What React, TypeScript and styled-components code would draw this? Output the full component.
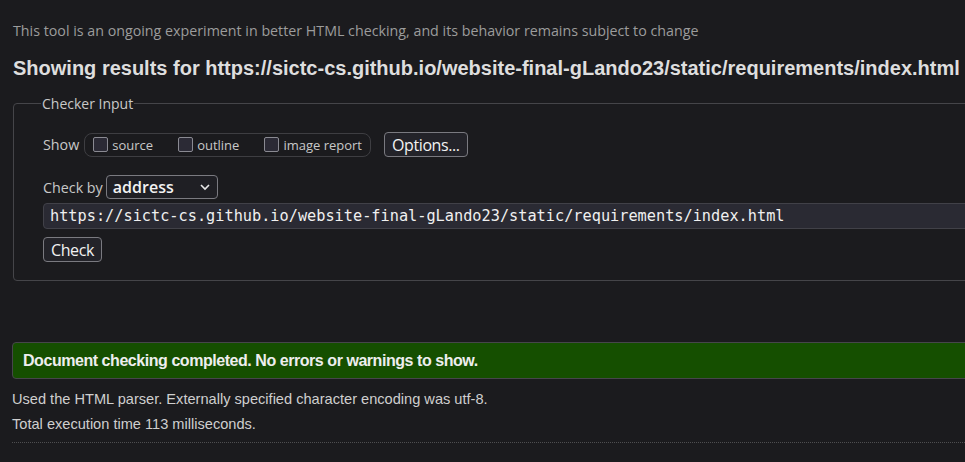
import React from "react";
import styled, { createGlobalStyle } from "styled-components";

const GlobalStyle = createGlobalStyle`
  html, body {
    margin: 0;
    padding: 0;
    background: #1b1b1e;
    overflow: hidden;
  }
  body {
    font-family: "Open Sans", "Noto Sans", sans-serif;
    color: #d8d8d8;
  }
`;

const Page = styled.div`
  width: 1010px;
  padding: 21px 0 0 13px;
`;

const Notice = styled.p`
  margin: 0;
  font-family: "Open Sans", sans-serif;
  font-size: 14.25px;
  line-height: 20px;
  color: #9c9c9c;
`;

const Heading = styled.h2`
  margin: 16px 0 0;
  font-family: "Liberation Sans", Arial, sans-serif;
  font-weight: 700;
  font-size: 20px;
  line-height: 22px;
  color: #dedede;
  white-space: nowrap;
`;

const Fieldset = styled.fieldset`
  margin: 15px 0 0;
  padding: 19px 29px 18px;
  border: 1px solid #454549;
  border-radius: 4px;
  min-width: 0;
`;

const Legend = styled.legend`
  margin-left: -2px;
  padding: 0 1px;
  font-size: 14px;
  color: #c8c8c8;
`;

const Row = styled.div<{ $gap?: number; $top?: number }>`
  display: flex;
  align-items: center;
  gap: ${(p) => p.$gap ?? 5}px;
  margin-top: ${(p) => p.$top ?? 0}px;
`;

const Label = styled.span`
  font-size: 14.3px;
  color: #c8c8c8;
`;

const CheckGroup = styled.div`
  display: flex;
  align-items: center;
  gap: 25px;
  height: 22px;
  padding: 0 8px;
  border: 1px solid #3e3e42;
  border-radius: 8px;
`;

const CheckItem = styled.label`
  display: flex;
  align-items: center;
  gap: 4px;
  font-size: 13px;
  color: #c8c8c8;
`;

const Box = styled.span`
  width: 13px;
  height: 13px;
  border: 1.5px solid #8a8a92;
  border-radius: 2px;
  background: #2b2a35;
`;

const Button = styled.button<{ $left?: number }>`
  margin-left: ${(p) => p.$left ?? 0}px;
  height: 25px;
  padding: 0 7px;
  font-family: "Open Sans", sans-serif;
  font-size: 16px;
  letter-spacing: -0.4px;
  color: #f2f2f2;
  background: #232329;
  border: 1px solid #7a7a80;
  border-radius: 4px;
`;

const Select = styled.div`
  display: flex;
  align-items: center;
  justify-content: space-between;
  width: 112px;
  height: 24px;
  box-sizing: border-box;
  padding: 0 6px;
  border: 1px solid #7a7a80;
  border-radius: 4px;
  background: #1f1f24;
  font-size: 16px;
  font-weight: 600;
  color: #f2f2f2;
`;

const UrlInput = styled.div`
  margin-top: 4px;
  height: 26px;
  box-sizing: border-box;
  padding: 0 6px;
  display: flex;
  align-items: center;
  background: #2a2a33;
  border: 1px solid #414148;
  border-radius: 4px;
  font-family: "DejaVu Sans Mono", "Liberation Mono", monospace;
  font-size: 15.25px;
  color: #f0f0f0;
  white-space: nowrap;
`;

const Success = styled.div`
  margin-top: 61px;
  margin-left: -1px;
  height: 37px;
  box-sizing: border-box;
  padding: 0 10px;
  display: flex;
  align-items: center;
  background: #154f00;
  border: 1px solid #46464a;
  border-radius: 4px;
  font-family: "Liberation Sans", Arial, sans-serif;
  font-weight: 700;
  font-size: 16px;
  letter-spacing: -0.45px;
  color: #eeeeee;
`;

const Detail = styled.p<{ $top?: number }>`
  margin: ${(p) => p.$top ?? 0}px 0 0 -1px;
  font-family: "Liberation Sans", Arial, sans-serif;
  font-size: 14.6px;
  line-height: 18px;
  color: #cfcfcf;
`;

const Divider = styled.hr`
  margin: 9px 0 0 -1px;
  border: none;
  border-top: 1px dotted #4e4e50;
`;

const Chevron = () => (
  <svg width="12" height="12" viewBox="0 0 12 12" fill="none">
    <path d="M2 4l4 4 4-4" stroke="#e8e8e8" strokeWidth="1.6" />
  </svg>
);

export default function App() {
  return (
    <>
      <GlobalStyle />
      <Page>
        <Notice>
          This tool is an ongoing experiment in better HTML checking, and its behavior remains subject to change
        </Notice>
        <Heading>
          Showing results for https://sictc-cs.github.io/website-final-gLando23/static/requirements/index.html
        </Heading>
        <Fieldset>
          <Legend>Checker Input</Legend>
          <Row>
            <Label>Show</Label>
            <CheckGroup>
              <CheckItem>
                <Box />
                source
              </CheckItem>
              <CheckItem>
                <Box />
                outline
              </CheckItem>
              <CheckItem>
                <Box />
                image report
              </CheckItem>
            </CheckGroup>
            <Button $left={8}>Options...</Button>
          </Row>
          <Row $top={18} $gap={3}>
            <Label>Check by</Label>
            <Select>
              address
              <Chevron />
            </Select>
          </Row>
          <UrlInput>
            https://sictc-cs.github.io/website-final-gLando23/static/requirements/index.html
          </UrlInput>
          <Row $top={8}>
            <Button>Check</Button>
          </Row>
        </Fieldset>
        <Success>Document checking completed. No errors or warnings to show.</Success>
        <Detail $top={11}>Used the HTML parser. Externally specified character encoding was utf-8.</Detail>
        <Detail $top={7}>Total execution time 113 milliseconds.</Detail>
        <Divider />
      </Page>
    </>
  );
}
